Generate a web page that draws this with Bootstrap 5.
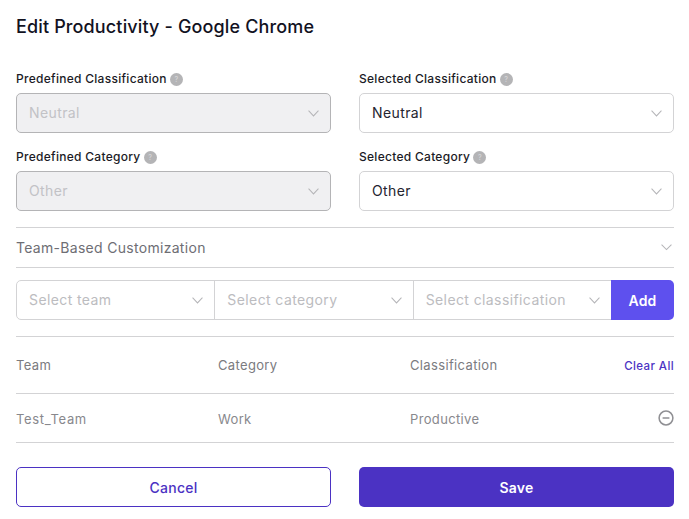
<!DOCTYPE html>
<html lang="en">
<head>
<meta charset="utf-8">
<title>Edit Productivity</title>
<link href="https://cdn.jsdelivr.net/npm/bootstrap@5.3.0/dist/css/bootstrap.min.css" rel="stylesheet">
<style>
:root{--chev:url("data:image/svg+xml,%3Csvg xmlns='http://www.w3.org/2000/svg' viewBox='0 0 12 7'%3E%3Cpath d='M.6.6 6 6l5.4-5.4' fill='none' stroke='%23b5b5b8' stroke-width='1.1'/%3E%3C/svg%3E");}
body{font-family:Inter,"Noto Sans",sans-serif;background:#fff;color:#14141f;overflow:hidden}
.sheet{width:658px;margin-left:16px;padding-top:15px}
.ttl{font-size:18px;line-height:24px;font-weight:500;margin:0 0 31px;color:#12121f;letter-spacing:.14px}
.pair{--bs-gutter-x:28px;--bs-gutter-y:0;margin-bottom:15px}
.pair+.pair{margin-bottom:16px}
.lbl{font-size:12px;line-height:18px;font-weight:500;margin-bottom:5px;color:#1b1b26;display:flex;align-items:center;gap:3px;height:18px;letter-spacing:.28px}
.tip{width:13px;height:13px;border-radius:50%;background:#b4b4b6;color:#d4d4d6;font-size:7px;line-height:13px;text-align:center;flex:none;letter-spacing:0}
.sel.form-select{height:40px;font-size:14px;line-height:20px;padding:0 30px 0 12px;border:1px solid #d3d3d5;border-radius:5px;color:#24242f;background-image:var(--chev);background-size:11px 6.5px;background-position:right 11px center;box-shadow:none;letter-spacing:.4px}
.sel.form-select:disabled{background-color:#f0f0f2;border-color:#b4b4b6;color:#c2c2c6;opacity:1}
.sel.ghost.form-select{color:#bcbcc0;border-color:#d3d3d5;letter-spacing:.4px}
.acc{border-top:1px solid #d3d3d5;border-bottom:1px solid #d3d3d5;height:41px;font-size:14px;color:#6e6e74;margin:0 0 12px;letter-spacing:.3px}
.acc svg{width:11px;height:6.5px;flex:none;margin-right:2px}
.teamgrp{margin-bottom:16px}
.teamgrp .sel.form-select{flex:1 1 0;width:auto;min-width:0}
.teamgrp .sel.form-select:first-child{border-radius:5px 0 0 5px}
.teamgrp .sel.form-select:not(:first-child){margin-left:-1px;border-radius:0;border-left-color:#d3d3d5}
.addb.btn{width:63px;height:40px;flex:none;background:#5e50ee;border:0;border-radius:0 5px 5px 0;font-size:14px;font-weight:600;color:#fff;padding:0;margin-left:-1px;letter-spacing:.2px}
.tbl{--bs-table-bg:transparent;border-top:1px solid #d3d3d5;margin-bottom:24px;font-size:13px;color:#7b7b80;table-layout:fixed;width:100%;letter-spacing:.35px}
.tbl td,.tbl th{padding:0;vertical-align:middle;border-bottom:1px solid #d3d3d5;font-weight:400;color:#7b7b80;box-shadow:none}
.tbl thead th{height:57px;padding-top:1px}
.tbl tbody td{height:49px;color:#88888d;padding-top:4px}
.tbl .lead-cell{letter-spacing:.65px}
.c1{width:202px}.c2{width:192px}.c4{width:90px}
.clr{font-size:11.5px;font-weight:500;color:#4b32c3;text-decoration:none;letter-spacing:.4px}
.minus{width:16px;height:16px;display:block;margin:-4px 0 0 auto}
.foot{--bs-gutter-x:28px;--bs-gutter-y:0}
.cancel.btn,.save.btn{width:100%;height:40px;font-size:14px;font-weight:500;border-radius:5px;padding:0;letter-spacing:.25px}
.cancel.btn{border:1px solid #4b32c3;color:#4b32c3;background:#fff}
.save.btn{border:0;background:#4b32c3;color:#fff;font-weight:600}
</style>
</head>
<body>
<div class="sheet">
  <h1 class="ttl">Edit Productivity - Google Chrome</h1>

  <div class="row pair">
    <div class="col-6">
      <div class="lbl">Predefined Classification <span class="tip">?</span></div>
      <select class="form-select sel" disabled><option>Neutral</option></select>
    </div>
    <div class="col-6">
      <div class="lbl">Selected Classification <span class="tip">?</span></div>
      <select class="form-select sel"><option>Neutral</option></select>
    </div>
  </div>
  <div class="row pair">
    <div class="col-6">
      <div class="lbl">Predefined Category <span class="tip">?</span></div>
      <select class="form-select sel" disabled><option>Other</option></select>
    </div>
    <div class="col-6">
      <div class="lbl">Selected Category <span class="tip">?</span></div>
      <select class="form-select sel"><option>Other</option></select>
    </div>
  </div>

  <div class="acc d-flex align-items-center justify-content-between">
    <span>Team-Based Customization</span>
    <svg viewBox="0 0 12 7"><path d="M.6.6 6 6l5.4-5.4" fill="none" stroke="#b5b5b8" stroke-width="1.1"/></svg>
  </div>

  <div class="input-group flex-nowrap teamgrp">
    <select class="form-select sel ghost"><option>Select team</option></select>
    <select class="form-select sel ghost"><option>Select category</option></select>
    <select class="form-select sel ghost"><option>Select classification</option></select>
    <button type="button" class="btn addb">Add</button>
  </div>

  <table class="table tbl">
    <colgroup><col class="c1"><col class="c2"><col><col class="c4"></colgroup>
    <thead>
      <tr><th>Team</th><th>Category</th><th>Classification</th><th class="text-end"><a href="#" class="clr">Clear All</a></th></tr>
    </thead>
    <tbody>
      <tr><td class="lead-cell">Test_Team</td><td>Work</td><td>Productive</td>
        <td><svg class="minus" viewBox="0 0 16 16"><circle cx="8" cy="8" r="6.9" fill="none" stroke="#8f8f93" stroke-width="1.5"/><path d="M4.6 8h6.8" stroke="#8f8f93" stroke-width="1.5"/></svg></td></tr>
    </tbody>
  </table>

  <div class="row foot">
    <div class="col-6"><button type="button" class="btn cancel">Cancel</button></div>
    <div class="col-6"><button type="button" class="btn save">Save</button></div>
  </div>
</div>
<script src="https://cdn.jsdelivr.net/npm/bootstrap@5.3.0/dist/js/bootstrap.bundle.min.js"></script>
</body>
</html>
